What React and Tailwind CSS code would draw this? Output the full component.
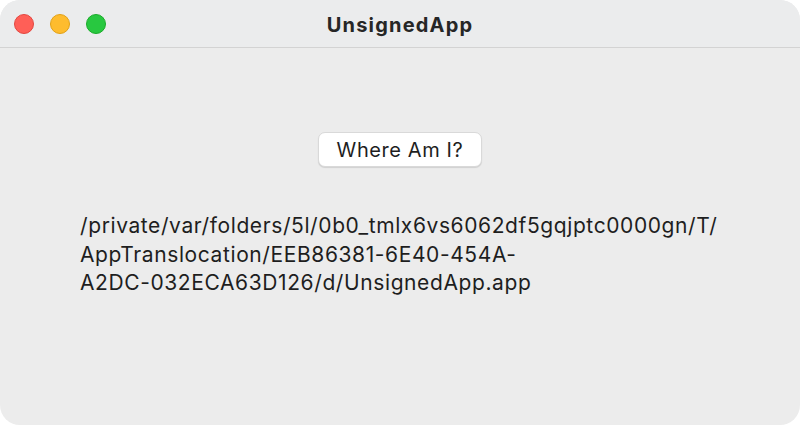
import React from "react";

export default function App() {
  const font = { fontFamily: "Inter, 'Noto Sans', sans-serif" };
  return (
    <div className="w-[800px] h-[425px] bg-white" style={font}>
      <div className="w-full h-full rounded-[20px] overflow-hidden bg-[#ececec] flex flex-col">
        <div className="relative h-[48px] shrink-0 bg-[#ebeced] border-b border-[#d3d3d3] flex items-center">
          <div className="flex items-center gap-[16px] pl-[14px]">
            <div className="w-[20px] h-[20px] rounded-full bg-[#ff5f57] border border-[#e2463f]" />
            <div className="w-[20px] h-[20px] rounded-full bg-[#febc2e] border border-[#e1a116]" />
            <div className="w-[20px] h-[20px] rounded-full bg-[#28c840] border border-[#1aab29]" />
          </div>
          <div className="absolute inset-0 flex items-center justify-center pt-[2px] pointer-events-none">
            <span className="text-[20px] font-bold text-[#262626] tracking-[1.2px]">UnsignedApp</span>
          </div>
        </div>
        <div className="flex flex-col items-center pt-[84px]">
          <button className="h-[35px] w-[164px] bg-white rounded-[7px] border border-[#d9d9d9] shadow-[0_1px_1px_rgba(0,0,0,0.12)] text-[20px] tracking-[0.6px] text-[#1e1e1e] flex items-center justify-center">
            Where Am I?
          </button>
        </div>
        <div className="pl-[80px] pt-[45px] text-[21px] tracking-[0.6px] leading-[28.5px] text-[#1e1e1e]">
          <div>/private/var/folders/5l/0b0_tmlx6vs6062df5gqjptc0000gn/T/</div>
          <div>AppTranslocation/EEB86381-6E40-454A-</div>
          <div>A2DC-032ECA63D126/d/UnsignedApp.app</div>
        </div>
      </div>
    </div>
  );
}
